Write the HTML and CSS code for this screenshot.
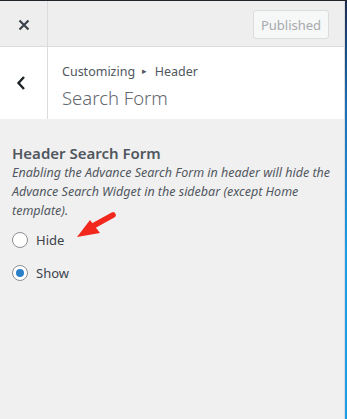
FILE: index.html
```html
<!DOCTYPE html>
<html lang="en">
<head>
<meta charset="UTF-8">
<meta name="viewport" content="width=device-width, initial-scale=1.0">
<title>Customizing Header</title>
<link rel="stylesheet" href="styles.css">
</head>
<body>

<div class="frame">
    <div class="panel">
        <!-- Top bar with close and publish -->
        <div class="topbar">
            <div class="close-btn">
                <svg width="12" height="12" viewBox="0 0 12 12">
                    <path d="M1.5 1.5 L10.5 10.5 M10.5 1.5 L1.5 10.5" stroke="#3c434a" stroke-width="2.2" fill="none"/>
                </svg>
            </div>
            <div class="topbar-right">
                <button class="publish-btn" disabled>Published</button>
            </div>
        </div>

        <!-- Section title -->
        <div class="section-head">
            <div class="back-btn">
                <svg width="10" height="16" viewBox="0 0 10 16">
                    <path d="M8 2 L2.5 8 L8 14" stroke="#1d2327" stroke-width="2.4" fill="none"/>
                </svg>
            </div>
            <div class="section-title">
                <div class="crumbs">Customizing <span class="crumb-arrow">&#9656;</span> Header</div>
                <h3>Search Form</h3>
            </div>
        </div>

        <!-- Control -->
        <div class="control">
            <div class="control-title">Header Search Form</div>
            <p class="control-desc">Enabling the Advance Search Form in header will hide the Advance Search Widget in the sidebar (except Home template).</p>

            <label class="radio-row">
                <input type="radio" name="hsf" value="hide">
                <span class="radio"></span>
                Hide
            </label>
            <label class="radio-row">
                <input type="radio" name="hsf" value="show" checked>
                <span class="radio checked"></span>
                Show
            </label>

            <!-- annotation arrow -->
            <svg class="note-arrow" width="42" height="28" viewBox="0 0 42 28">
                <path d="M39 3 L19 14" stroke="#f2281e" stroke-width="5.5" stroke-linecap="round" fill="none"/>
                <polygon points="3,25 16,8 26,21" fill="#f2281e"/>
            </svg>
        </div>
    </div>
    <div class="edge"></div>
</div>

</body>
</html>
```

FILE: styles.css
```css
* {
    box-sizing: border-box;
}
html, body {
    margin: 0;
    padding: 0;
    height: 100%;
}
body {
    font-family: "Noto Sans", "Open Sans", sans-serif;
    color: #50575e;
    background-color: #f0f0f1;
}
.frame {
    display: flex;
    height: 419px;
    border-top: 1px solid #1f2428;
}
.panel {
    flex: 1;
    display: flex;
    flex-direction: column;
    background-color: #f0f0f1;
    border-right: 1px solid #dcdcde;
}
.edge {
    width: 2px;
    background: linear-gradient(to bottom, #1c2d4e 0%, #1d6fb8 25%, #1e9be8 60%, #1e9be8 100%);
}
.topbar {
    display: flex;
    height: 46px;
    background-color: #eeeeee;
    border-bottom: 1px solid #dcdcde;
}
.close-btn {
    width: 48px;
    display: flex;
    align-items: center;
    justify-content: center;
    border-right: 1px solid #dcdcde;
    padding-top: 3px;
}
.topbar-right {
    flex: 1;
    display: flex;
    align-items: center;
    justify-content: flex-end;
    padding-right: 15px;
}
.publish-btn {
    font-family: inherit;
    font-size: 13px;
    height: 29px;
    width: 76px;
    padding: 0;
    color: #a7aaad;
    background-color: #f6f7f7;
    border: 1px solid #dcdcde;
    border-radius: 3px;
    margin-top: 2px;
}
.section-head {
    display: flex;
    height: 72px;
    background-color: #fff;
}
.back-btn {
    width: 48px;
    display: flex;
    align-items: center;
    justify-content: center;
    border-right: 1px solid #dcdcde;
    padding: 0 6px 0 0;
}
.section-title {
    padding: 14px 0 0 14px;
}
.crumbs {
    font-size: 12.5px;
    line-height: 20px;
    color: #50575e;
}
.crumb-arrow {
    font-size: 9px;
    margin: 0 4px;
    vertical-align: 2px;
}
.section-title h3 {
    margin: 2px 0 0;
    font-size: 18.5px;
    font-weight: 300;
    line-height: 28px;
    color: #646970;
}
.control {
    position: relative;
    padding: 24px 12px 0 12px;
}
.control-title {
    font-size: 15px;
    font-weight: 600;
    line-height: 20px;
    color: #50575e;
}
.control-desc {
    margin: 0 0 3px;
    font-size: 12.5px;
    font-style: italic;
    line-height: 19px;
    color: #50575e;
}
.radio-row {
    display: flex;
    align-items: center;
    gap: 8px;
    height: 33px;
    font-size: 13px;
    color: #3c434a;
}
.radio-row input {
    display: none;
}
.radio {
    width: 16px;
    height: 16px;
    border: 1px solid #8c8f94;
    border-radius: 50%;
    background-color: #fff;
    display: flex;
    align-items: center;
    justify-content: center;
}
.radio.checked::after {
    content: "";
    width: 8px;
    height: 8px;
    border-radius: 50%;
    background-color: #2a7fc9;
}
.note-arrow {
    position: absolute;
    left: 74px;
    top: 93px;
}
```
